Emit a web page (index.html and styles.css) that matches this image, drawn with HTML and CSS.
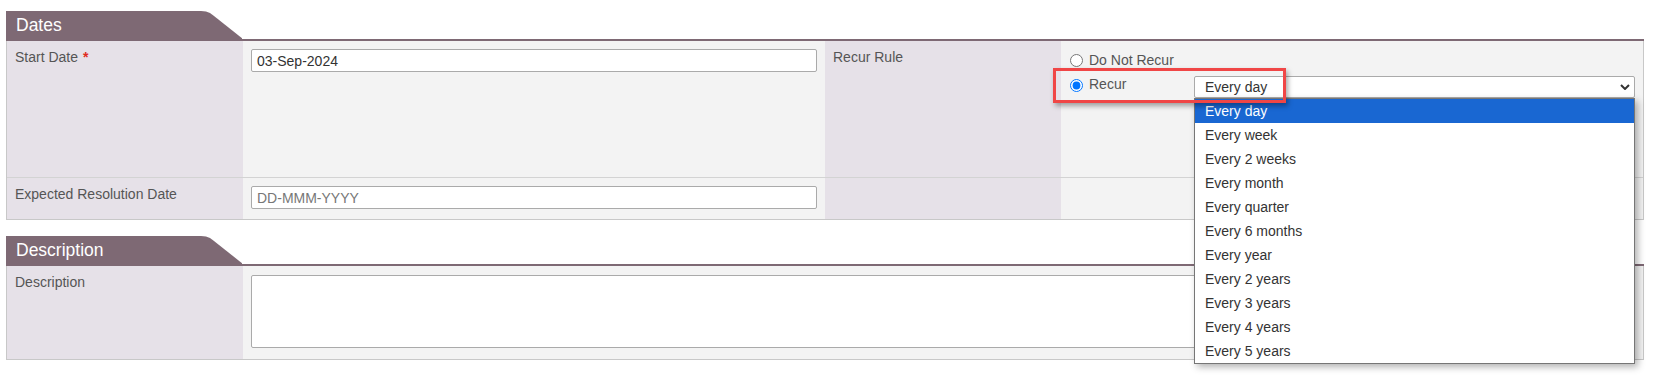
FILE: index.html
```html
<!DOCTYPE html>
<html>
<head>
    <link rel="stylesheet" href="styles.css">
</head>
<body>
    <div class="page">
        <div class="section">
            <div class="section-head"><div class="tab">Dates</div></div>
            <div class="grid dates-grid">
                <div class="label row-top">Start Date <span class="req">*</span></div>
                <div class="field row-top">
                    <input class="text-input" type="text" value="03-Sep-2024">
                </div>
                <div class="label row-top">Recur Rule</div>
                <div class="field row-top recur-cell">
                    <label class="radio-line">
                        <input type="radio" name="recur"> Do Not Recur
                    </label>
                    <div class="recur-row">
                        <label class="radio-line recur-label">
                            <input type="radio" name="recur" checked> Recur
                        </label>
                        <div class="select-wrap">
                            <div class="select-box">
                                <span>Every day</span>
                                <svg class="chevron" width="10" height="6" viewBox="0 0 10 6">
                                    <path d="M1 1 L5 5 L9 1" fill="none" stroke="#333" stroke-width="2"/>
                                </svg>
                            </div>
                            <ul class="dropdown">
                                <li class="selected">Every day</li>
                                <li>Every week</li>
                                <li>Every 2 weeks</li>
                                <li>Every month</li>
                                <li>Every quarter</li>
                                <li>Every 6 months</li>
                                <li>Every year</li>
                                <li>Every 2 years</li>
                                <li>Every 3 years</li>
                                <li>Every 4 years</li>
                                <li>Every 5 years</li>
                            </ul>
                        </div>
                    </div>
                    <!-- annotation box round the Recur option -->
                    <div class="highlight-box"></div>
                </div>

                <div class="label">Expected Resolution Date</div>
                <div class="field">
                    <input class="text-input" type="text" placeholder="DD-MMM-YYYY">
                </div>
                <div class="label"></div>
                <div class="field"></div>
            </div>
        </div>

        <div class="section section-gap">
            <div class="section-head"><div class="tab">Description</div></div>
            <div class="grid desc-grid">
                <div class="label">Description</div>
                <div class="field desc-field">
                    <textarea class="text-area"></textarea>
                </div>
            </div>
        </div>
    </div>
</body>
</html>
```

FILE: styles.css
```css
body {
    margin: 0;
    min-height: 378px;
    font-family: "Liberation Sans", Arial, sans-serif;
    font-size: 14px;
    color: #555;
    background: #fff;
}

.page {
    padding: 11px 12px 0 6px;
}

.section-gap {
    margin-top: 16px;
}

.section-head {
    height: 28px;
    border-bottom: 2px solid #7e6974;
}

.tab {
    width: 236px;
    height: 28px;
    line-height: 28px;
    padding-left: 10px;
    box-sizing: border-box;
    background-color: #7e6974;
    color: #fff;
    font-size: 17.5px;
    clip-path: polygon(0 0, 195px 0, 200px 0.5px, 204px 2px, 208px 5px, 237px 28px, 0 28px);
}

.grid {
    display: grid;
    border-left: 1px solid #c8c8c8;
    border-right: 1px solid #c8c8c8;
    border-bottom: 1px solid #c8c8c8;
}

.dates-grid {
    grid-template-columns: 236px 582px 236px 1fr;
}

.desc-grid {
    grid-template-columns: 236px 1fr;
}

.label {
    background-color: #e6e1e8;
    padding: 8px 8px 0 8px;
    line-height: 16px;
    height: 41px;
    box-sizing: border-box;
}

.field {
    background-color: #f3f3f3;
    padding: 8px;
    height: 41px;
    box-sizing: border-box;
}

.row-top {
    height: 137px;
    border-bottom: 1px solid #d3d3d3;
}

.req {
    color: #e02b20;
    font-weight: bold;
    margin-left: 1px;
}

.text-input {
    display: block;
    width: 100%;
    height: 23px;
    box-sizing: border-box;
    border: 1px solid #aaa;
    border-radius: 2px;
    background: #fff;
    padding: 0 5px;
    font-family: "Liberation Sans", Arial, sans-serif;
    font-size: 14px;
    color: #333;
}

.text-input::placeholder {
    color: #777;
}

/* recur rule */
.recur-cell {
    position: relative;
    padding-top: 11px;
}

.radio-line {
    display: flex;
    align-items: center;
    height: 16px;
    line-height: 16px;
    margin-bottom: 8px;
}

.radio-line input {
    width: 13px;
    height: 13px;
    margin: 0 6px 0 1px;
}

.recur-row {
    display: flex;
    align-items: flex-start;
}

.recur-label {
    width: 125px;
    flex-shrink: 0;
    margin-bottom: 0;
}

.recur-label input {
    position: relative;
    top: 1px;
}

.select-wrap {
    position: relative;
    flex: 1;
}

.select-box {
    height: 22px;
    box-sizing: border-box;
    border: 1px solid #aaa;
    border-radius: 2px;
    background: #fff;
    display: flex;
    align-items: center;
    justify-content: space-between;
    padding: 0 4px 0 10px;
    color: #333;
}

.dropdown {
    position: absolute;
    top: 100%;
    left: 0;
    right: 0;
    margin: 0;
    padding: 0;
    list-style: none;
    background: #fff;
    border: 1px solid #767676;
    box-shadow: 3px 3px 7px rgba(0, 0, 0, 0.3);
    z-index: 10;
}

.dropdown li {
    height: 24px;
    line-height: 24px;
    padding-left: 10px;
    color: #333;
}

.dropdown li.selected {
    background-color: #1967d2;
    color: #fff;
}

.highlight-box {
    position: absolute;
    left: -8px;
    top: 27px;
    width: 233px;
    height: 35px;
    box-sizing: border-box;
    border: 3px solid #f04646;
    box-shadow: 2px 3px 5px rgba(0, 0, 0, 0.35);
    z-index: 11;
}

/* description */
.desc-grid .label,
.desc-grid .field {
    height: 93px;
}

.desc-field {
    padding-top: 9px;
}

.text-area {
    display: block;
    width: 100%;
    height: 73px;
    box-sizing: border-box;
    border: 1px solid #aaa;
    border-radius: 2px;
    background: #fff;
    resize: none;
}
```
